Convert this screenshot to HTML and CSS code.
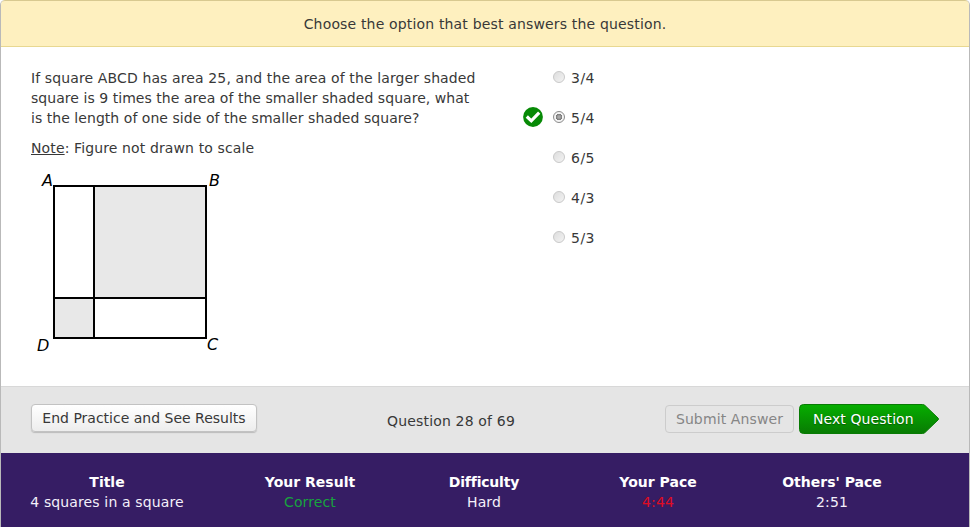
FILE: index.html
```html
<!DOCTYPE html>
<html lang="en">
<head>
<meta charset="utf-8">
<title>Practice question</title>
<link rel="stylesheet" href="styles.css">
</head>
<body>
<div class="practice">
  <header class="banner">Choose the option that best answers the question.</header>
  <main class="content">
    <section class="question">
      <p><span class="l1">If square ABCD has area 25, and the area of the larger shaded</span><br><span class="l2">square is 9 times the area of the smaller shaded square, what</span><br><span class="l2">is the length of one side of the smaller shaded square?</span></p>
      <p class="note"><u>Note</u>: Figure not drawn to scale</p>
      <svg class="figure" width="200" height="200" viewBox="0 0 200 200">
        <g fill="#e8e8e8"><rect x="64" y="21" width="112" height="112"/><rect x="24" y="133" width="40" height="40"/></g>
        <path d="M24 21H176V173H24ZM64 21V173M24 133H176" fill="none" stroke="#000" stroke-width="2"/>
        <text x="12" y="21">A</text><text x="179" y="21">B</text>
        <text x="7" y="186">D</text><text x="177" y="185">C</text>
      </svg>
    </section>
    <ul class="options">
      <li><span class="mark"></span><i class="radio"></i><span>3/4</span></li>
      <li><span class="mark"><svg width="20" height="20" viewBox="0 0 20 20"><circle cx="10" cy="10" r="9.900" fill="#078a06"/><path d="M3.800 9.500 8.300 13.800 16.200 5.700" fill="none" stroke="#fff" stroke-width="3.200"/></svg></span><i class="radio checked"></i><span>5/4</span></li>
      <li><span class="mark"></span><i class="radio"></i><span>6/5</span></li>
      <li><span class="mark"></span><i class="radio"></i><span>4/3</span></li>
      <li><span class="mark"></span><i class="radio"></i><span>5/3</span></li>
    </ul>
  </main>
  <nav class="actions">
    <button class="btn end">End Practice and See Results</button>
    <span class="progress">Question 28 of 69</span>
    <button class="btn submit" disabled>Submit Answer</button>
    <button class="next">
      <svg width="141" height="30" viewBox="0 0 141 30">
        <defs><linearGradient id="green" x2="0" y2="1"><stop offset="0" stop-color="#06ae00"/><stop offset="1" stop-color="#087b03"/></linearGradient></defs>
        <path d="M4.500 .5H123.500Q125 .5 126 1.500L139 14Q140 15 139 16L126 28.500Q125 29.500 123.500 29.500H4.500Q.5 29.500 .5 25.500V4.500Q.5 .5 4.500 .5Z" fill="url(#green)" stroke="#087b04"/>
      </svg>
      <span class="next-label">Next Question</span>
    </button>
  </nav>
  <footer class="stats">
    <dl class="first"><dt>Title</dt><dd>4 squares in a square</dd></dl>
    <dl><dt>Your Result</dt><dd class="good">Correct</dd></dl>
    <dl><dt class="tight">Difficulty</dt><dd>Hard</dd></dl>
    <dl><dt>Your Pace</dt><dd class="slow">4:44</dd></dl>
    <dl><dt>Others' Pace</dt><dd>2:51</dd></dl>
  </footer>
</div>
</body>
</html>
```
FILE: styles.css
```css
* { box-sizing: border-box; }
body { margin: 0; background: #fff; color: #383838; font: 14px/20px Verdana, "DejaVu Sans", sans-serif; }
.practice { width: 970px; height: 527px; overflow: hidden; border: 1px solid #b9b9b9; border-top: 0; border-bottom: 0; border-radius: 5px 5px 0 0; display: flex; flex-direction: column; }
.banner { height: 47px; flex: none; background: #fef0bf; border: 1px solid #e8d891; border-width: 1px 0; border-top-color: #d8c990; border-radius: 4px 4px 0 0; text-align: center; line-height: 46px; letter-spacing: .165px; white-space: nowrap; }
.content { height: 339px; flex: none; display: flex; padding-top: 21px; }
.question { width: 522px; padding-left: 30px; white-space: nowrap; }
.question p { margin: 0 0 10px; }
.l1, .note { letter-spacing: .12px; }
.l2 { letter-spacing: .045px; }
.figure { display: block; margin: -3px 0 0 -1px; }
.figure text { font: italic 16px "DejaVu Sans", sans-serif; fill: #000; }
.options { list-style: none; margin: 0; padding: 0; display: flex; flex-direction: column; gap: 20px; letter-spacing: .5px; }
.options li { display: flex; height: 20px; }
.mark { width: 30px; height: 20px; margin-top: -1px; }
.mark svg { display: block; }
.radio { width: 12px; height: 12px; margin: 3px 6px 0 0; border: 1px solid #c9c9c9; border-radius: 50%; background: linear-gradient(135deg, #ddd, #f3f3f3); }
.checked { border-color: #8b8b8b; background: radial-gradient(circle, #aaa 0 1px, #777 3px, #f4f4f4 3.500px); }
.actions { height: 67px; flex: none; background: #e5e5e5; border-top: 1px solid #d8d8d8; display: flex; align-items: flex-start; padding-left: 30px; white-space: nowrap; }
button { font: inherit; color: #383838; padding: 0; white-space: nowrap; }
.btn { height: 28px; border: 1px solid #c2c2c2; border-radius: 4px; }
.end { width: 226px; margin-top: 17px; background: linear-gradient(#fff, #ededed); box-shadow: 0 1px 1px #bbb; }
.progress { width: 130px; margin: 24px 0 0 130px; letter-spacing: .17px; }
.submit { width: 129px; margin: 18px 0 0 148px; color: #868686; border-color: #ccc; background: #e5e5e5; letter-spacing: .12px; }
.next { width: 141px; height: 30px; margin: 17px 0 0 5px; border: 0; background: none; color: #fff; display: grid; letter-spacing: .08px; }
.next svg, .next-label { grid-area: 1 / 1; }
.next-label { text-align: left; padding-left: 14px; line-height: 30px; text-shadow: 0 1px 1px #065b04; }
.stats { flex: 1; background: #361d64; color: #f4f0fa; display: grid; grid-template-columns: 222px repeat(4, 174px); padding-top: 19px; text-align: center; white-space: nowrap; }
.stats dl { margin: 0; }
.stats .first { padding-right: 10px; }
.stats dt { font-weight: bold; color: #fff; }
.stats dt.tight { letter-spacing: -.2px; }
.stats dd { margin: 0; letter-spacing: .13px; }
.stats .good { color: #18a33e; }
.stats .slow { color: #e00c22; }
```
